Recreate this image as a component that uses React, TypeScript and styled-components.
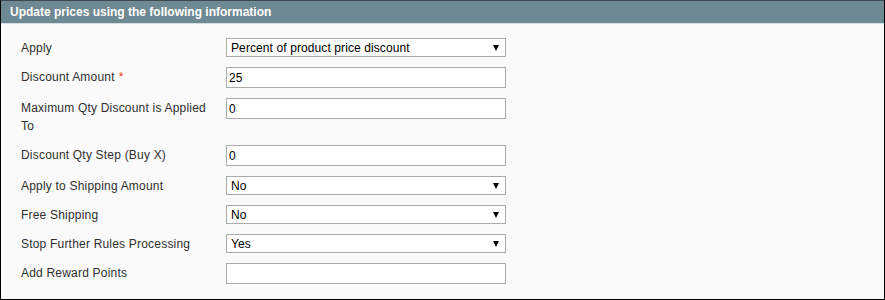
import React from 'react'
import styled, { createGlobalStyle } from 'styled-components'

const GlobalStyle = createGlobalStyle`
	html, body {
		margin: 0;
		padding: 0;
		background: #ffffff;
	}
	body {
		font-family: "Liberation Sans", Arial, sans-serif;
		font-size: 12px;
	}
`

const Panel = styled.div`
	width: 885px;
	height: 300px;
	box-sizing: border-box;
	border: 1px solid #000000;
	border-top-color: #3c4a4f;
	background: #fafafa;
	display: flex;
	flex-direction: column;
`

const Header = styled.div`
	height: 22px;
	border-bottom: 1px solid #d3dfe2;
	background: #6f8992;
	color: #ffffff;
	font-weight: bold;
	font-size: 12px;
	line-height: 22px;
	padding-left: 9px;
`

const Form = styled.div`
	display: flex;
	flex-direction: column;
	gap: 10px;
	padding: 14px 0 0 20px;
`

const Row = styled.div`
	display: grid;
	grid-template-columns: 205px 280px;
	align-items: start;
`

const Label = styled.div`
	color: #2f2f2f;
	font-size: 12px;
	letter-spacing: 0.2px;
	line-height: 18px;
	padding-top: 1px;
	padding-right: 12px;
`

const Required = styled.span`
	color: #eb340a;
	margin-left: 4px;
`

const TextInput = styled.input`
	box-sizing: border-box;
	width: 280px;
	height: 21px;
	margin: 0;
	padding: 0 2px;
	border: 1px solid #aaaaaa;
	background: #ffffff;
	font-family: "Liberation Sans", Arial, sans-serif;
	font-size: 12px;
	letter-spacing: 0.1px;
	color: #000000;
	outline: none;
`

const SelectWrap = styled.div`
	position: relative;
	width: 280px;
	height: 19px;
	&::after {
		content: '';
		position: absolute;
		right: 7px;
		top: 7px;
		border-left: 3px solid transparent;
		border-right: 3px solid transparent;
		border-top: 6px solid #000000;
		pointer-events: none;
	}
`

const Select = styled.select`
	appearance: none;
	-webkit-appearance: none;
	box-sizing: border-box;
	width: 100%;
	height: 100%;
	margin: 0;
	padding: 0 16px 0 4px;
	border: 1px solid #aaaaaa;
	border-radius: 0;
	background: #ffffff;
	font-family: "Liberation Sans", Arial, sans-serif;
	font-size: 12px;
	letter-spacing: 0.1px;
	color: #000000;
	outline: none;
`

type Field =
	| { label: string; kind: 'select'; value: string; options: string[]; required?: boolean }
	| { label: string; kind: 'input'; value: string; required?: boolean }

const fields: Field[] = [
	{
		label: 'Apply',
		kind: 'select',
		value: 'Percent of product price discount',
		options: [
			'Percent of product price discount',
			'Fixed amount discount',
			'Fixed amount discount for whole cart',
			'Buy X get Y free (discount amount is Y)',
		],
	},
	{ label: 'Discount Amount', kind: 'input', value: '25', required: true },
	{ label: 'Maximum Qty Discount is Applied To', kind: 'input', value: '0' },
	{ label: 'Discount Qty Step (Buy X)', kind: 'input', value: '0' },
	{ label: 'Apply to Shipping Amount', kind: 'select', value: 'No', options: ['Yes', 'No'] },
	{ label: 'Free Shipping', kind: 'select', value: 'No', options: ['No', 'For matching items only', 'For shipment with matching items'] },
	{ label: 'Stop Further Rules Processing', kind: 'select', value: 'Yes', options: ['Yes', 'No'] },
	{ label: 'Add Reward Points', kind: 'input', value: '' },
]

const App = () => {
	return (
		<>
			<GlobalStyle />
			<Panel>
				<Header>Update prices using the following information</Header>
				<Form>
					{fields.map((f) => (
						<Row key={f.label}>
							<Label>
								{f.label}
								{f.required && <Required>*</Required>}
							</Label>
							{f.kind === 'select' ? (
								<SelectWrap>
									<Select defaultValue={f.value}>
										{f.options.map((o) => (
											<option key={o}>{o}</option>
										))}
									</Select>
								</SelectWrap>
							) : (
								<TextInput type="text" defaultValue={f.value} />
							)}
						</Row>
					))}
				</Form>
			</Panel>
		</>
	)
}

export default App
